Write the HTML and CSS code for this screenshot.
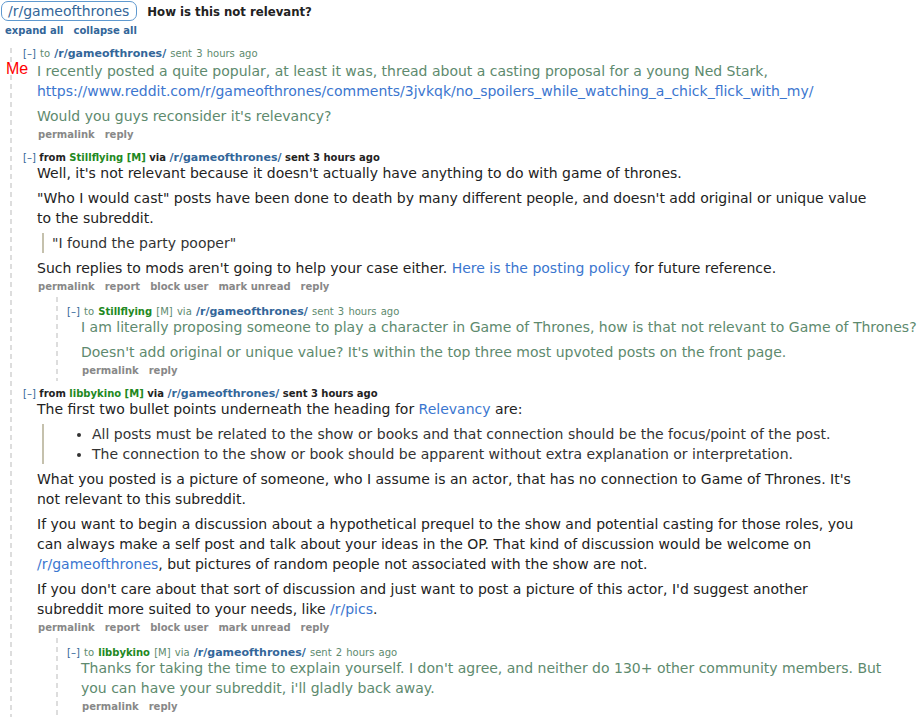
FILE: index.html
```html
<!DOCTYPE html>
<html>
<head>
<meta charset="utf-8">
<title>How is this not relevant?</title>
<link rel="stylesheet" href="styles.css">
</head>
<body>
<div class="page">
  <div class="head">
    <a class="pill">/r/gameofthrones</a>
    <span class="subject">How is this not relevant?</span>
  </div>
  <div class="expand"><a>expand all</a><a>collapse all</a></div>

  <div class="thread">
    <div class="msg own first">
      <span class="me">Me</span>
      <p class="tagline"><a class="tog">[–]</a> to <a class="sr">/r/gameofthrones/</a> sent 3 hours ago</p>
      <div class="md">
        <p>I recently posted a quite popular, at least it was, thread about a casting proposal for a young Ned Stark, <a>https://www.reddit.com/r/gameofthrones/comments/3jvkqk/no_spoilers_while_watching_a_chick_flick_with_my/</a></p>
        <p>Would you guys reconsider it's relevancy?</p>
      </div>
      <ul class="buttons"><li>permalink</li><li>reply</li></ul>
    </div>

    <div class="msg other">
      <p class="tagline"><a class="tog">[–]</a> from <a class="user">Stillflying</a> <span class="mod">[M]</span> via <a class="sr">/r/gameofthrones/</a> sent 3 hours ago</p>
      <div class="md">
        <p>Well, it's not relevant because it doesn't actually have anything to do with game of thrones.</p>
        <p>"Who I would cast" posts have been done to death by many different people, and doesn't add original or unique value to the subreddit.</p>
        <blockquote><p>"I found the party pooper"</p></blockquote>
        <p>Such replies to mods aren't going to help your case either. <a>Here is the posting policy</a> for future reference.</p>
      </div>
      <ul class="buttons"><li>permalink</li><li>report</li><li>block user</li><li>mark unread</li><li>reply</li></ul>
      <div class="child">
        <div class="msg own">
          <p class="tagline"><a class="tog">[–]</a> to <a class="user">Stillflying</a> <span class="modn">[M]</span> via <a class="sr">/r/gameofthrones/</a> sent 3 hours ago</p>
          <div class="md">
            <p>I am literally proposing someone to play a character in Game of Thrones, how is that not relevant to Game of Thrones?</p>
            <p>Doesn't add original or unique value? It's within the top three most upvoted posts on the front page.</p>
          </div>
          <ul class="buttons"><li>permalink</li><li>reply</li></ul>
        </div>
      </div>
    </div>

    <div class="msg other">
      <p class="tagline"><a class="tog">[–]</a> from <a class="user">libbykino</a> <span class="mod">[M]</span> via <a class="sr">/r/gameofthrones/</a> sent 3 hours ago</p>
      <div class="md">
        <p>The first two bullet points underneath the heading for <a>Relevancy</a> are:</p>
        <blockquote>
          <ul>
            <li>All posts must be related to the show or books and that connection should be the focus/point of the post.</li>
            <li>The connection to the show or book should be apparent without extra explanation or interpretation.</li>
          </ul>
        </blockquote>
        <p>What you posted is a picture of someone, who I assume is an actor, that has no connection to Game of Thrones. It's not relevant to this subreddit.</p>
        <p>If you want to begin a discussion about a hypothetical prequel to the show and potential casting for those roles, you can always make a self post and talk about your ideas in the OP. That kind of discussion would be welcome on <a>/r/gameofthrones</a>, but pictures of random people not associated with the show are not.</p>
        <p>If you don't care about that sort of discussion and just want to post a picture of this actor, I'd suggest another subreddit more suited to your needs, like <a>/r/pics</a>.</p>
      </div>
      <ul class="buttons"><li>permalink</li><li>report</li><li>block user</li><li>mark unread</li><li>reply</li></ul>
      <div class="child">
        <div class="msg own">
          <p class="tagline"><a class="tog">[–]</a> to <a class="user">libbykino</a> <span class="modn">[M]</span> via <a class="sr">/r/gameofthrones/</a> sent 2 hours ago</p>
          <div class="md narrow">
            <p>Thanks for taking the time to explain yourself. I don't agree, and neither do 130+ other community members. But you can have your subreddit, i'll gladly back away.</p>
          </div>
          <ul class="buttons"><li>permalink</li><li>reply</li></ul>
        </div>
      </div>
    </div>
  </div>
</div>
</body>
</html>
```

FILE: styles.css
```css
* { box-sizing: border-box; }
html, body { margin: 0; padding: 0; background: #fff; }
body {
  font-family: "DejaVu Sans", Verdana, sans-serif;
  font-size: 10px;
  color: #222;
}
a { text-decoration: none; cursor: pointer; }

.page { padding: 1px 0 0 1px; }

.head { display: flex; align-items: center; gap: 10px; height: 20px; }
.pill {
  font-family: "DejaVu Sans", Verdana, sans-serif;
  font-size: 14px;
  line-height: 18px;
  color: #369;
  border: 1px solid #5f99cf;
  border-radius: 7px;
  padding: 0 7px 0 6px;
}
.subject {
  font-family: "DejaVu Sans Condensed", "DejaVu Sans", sans-serif;
  font-stretch: condensed;
  font-weight: bold;
  font-size: 13px;
  color: #222;
}

.expand { display: flex; gap: 10px; margin-top: 4px; padding-left: 4px; line-height: 12px; }
.expand a { font-weight: bold; color: #369; }

.thread {
  margin: 11px 0 0 9px;
  padding-left: 13px;
  background: linear-gradient(#ddd 5px, transparent 5px) left top / 2px 9px repeat-y;
}

.msg { position: relative; }
.msg + .msg { margin-top: 7px; }

.me {
  position: absolute;
  left: -17px;
  top: 13px;
  font-family: "Liberation Sans", Arial, sans-serif;
  font-size: 16px;
  line-height: 16px;
  color: #f00;
}

.tagline { margin: 0; line-height: 12px; white-space: nowrap; }
.own > .tagline { color: #5e8a6e; font-weight: normal; word-spacing: 1px; }
.other > .tagline { color: #222; font-weight: bold; }
.tog { color: #369; font-weight: normal; }
.sr { color: #369; font-weight: bold; font-size: 11px; }
.user { color: #228822; font-weight: bold; }
.mod { color: #228822; font-weight: bold; }

.md {
  font-family: "DejaVu Sans", Verdana, sans-serif;
  font-size: 14px;
  line-height: 20px;
  margin: -1px 0 0 14px;
  max-width: 840px;
}
.md.narrow { max-width: 815px; }
.first > .md { margin-top: 1px; }
.own > .md { color: #5e8a6e; }
.other > .md { color: #222; }
.md p { margin: 0 0 5px; }
.md > :last-child { margin-bottom: 0; }
.md a { color: #3b76cf; }
.md blockquote {
  margin: 0 0 5px 5px;
  padding: 0 8px;
  border-left: 2px solid #c5c1ad;
  color: #333;
}
.md blockquote p:last-child { margin-bottom: 0; }
.md ul { margin: 0; padding: 0 0 0 40px; list-style: disc; }

.buttons {
  display: flex;
  gap: 10px;
  list-style: none;
  margin: 0 0 0 15px;
  padding: 3px 0 4px;
  line-height: 12px;
  font-weight: bold;
  color: #888;
}

.child {
  margin-left: 33px;
  padding: 9px 0 0 11px;
  background: linear-gradient(#ddd 5px, transparent 5px) left top / 2px 9px repeat-y;
}
```
